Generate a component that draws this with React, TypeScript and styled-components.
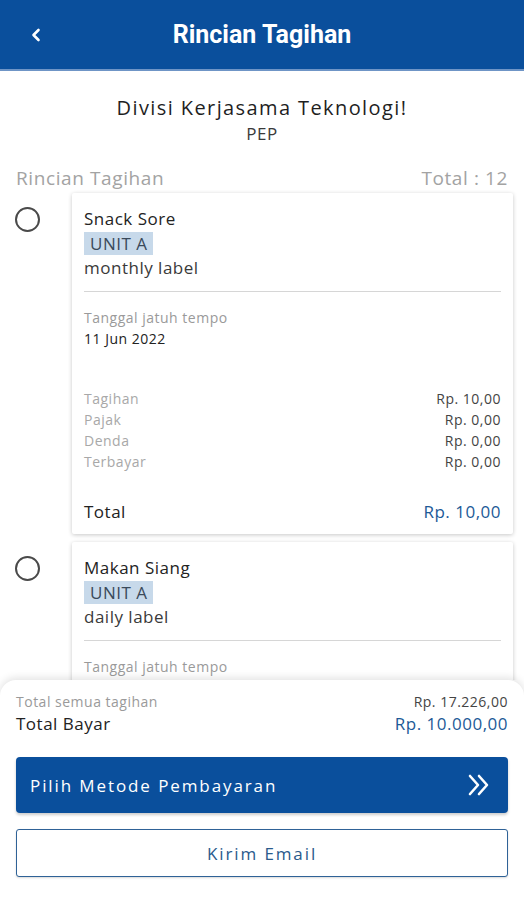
import React from "react";
import styled, { createGlobalStyle } from "styled-components";

const Global = createGlobalStyle`
  html, body { margin: 0; padding: 0; background: #fff; }
  * { box-sizing: border-box; }
  body { font-family: "Open Sans", "Noto Sans", sans-serif; }
`;

const Screen = styled.div`
  width: 524px;
  height: 900px;
  display: flex;
  flex-direction: column;
  overflow: hidden;
  background: #fff;
`;

const Header = styled.header`
  height: 71px;
  flex: none;
  background: #0a4f9c;
  display: grid;
  grid-template-columns: 72px 1fr 72px;
  align-items: center;
  color: #fff;
  border-bottom: 2px solid #6f95c6;
`;

const Back = styled.div`
  display: flex;
  justify-content: center;
`;

const Title = styled.h1`
  margin: 0;
  text-align: center;
  font-family: Roboto, sans-serif;
  font-weight: 700;
  font-size: 25px;
`;

const Scroll = styled.div`
  flex: 1;
  overflow: hidden;
  padding: 24px 0 0;
`;

const Org = styled.div`
  text-align: center;
  font-size: 20px;
  letter-spacing: 1.4px;
  color: #1f1f1f;
  line-height: 26px;
`;

const Sub = styled.div`
  text-align: center;
  font-size: 17px;
  letter-spacing: 0.6px;
  color: #3a3a3a;
  line-height: 24px;
  margin-top: 1px;
`;

const ListHead = styled.div`
  display: flex;
  justify-content: space-between;
  padding: 0 16px;
  margin-top: 20px;
  font-size: 19px;
  letter-spacing: 0.6px;
  color: #a3a3a3;
  line-height: 24px;
`;

const Row = styled.div`
  display: flex;
  align-items: flex-start;
  padding: 0 11px 0 15px;
  margin-top: 3px;
  & + & { margin-top: 8px; }
`;

const Radio = styled.div`
  width: 25px;
  height: 25px;
  border: 2px solid #4a4a4a;
  border-radius: 50%;
  flex: none;
  margin-top: 14px;
  margin-right: 32px;
`;

const Card = styled.div`
  flex: 1;
  background: #fff;
  border-radius: 2px;
  box-shadow: 0 1px 4px rgba(0,0,0,0.22);
  padding: 15px 12px 11px 12px;
  letter-spacing: 0.5px;
`;

const ItemName = styled.div`
  font-size: 17px;
  color: #232323;
  line-height: 22px;
`;

const Badge = styled.span`
  display: inline-block;
  background: #c7d9ea;
  color: #3a4a5a;
  font-size: 17px;
  line-height: 23px;
  padding: 0 6px;
  margin-top: 2px;
`;

const Label = styled.div`
  font-size: 17px;
  color: #3a3a3a;
  line-height: 25px;
`;

const Divider = styled.hr`
  border: none;
  border-top: 1px solid #d6d6d6;
  margin: 11px 0 15px;
`;

const Small = styled.div<{ $dark?: boolean }>`
  font-size: 14px;
  line-height: 21px;
  color: ${(p) => (p.$dark ? "#222" : "#9a9a9a")};
`;

const Lines = styled.div`
  margin-top: 39px;
`;

const Line = styled.div`
  display: flex;
  justify-content: space-between;
  font-size: 14px;
  line-height: 21px;
  color: #a8a8a8;
  & > span:last-child { color: #444; }
`;

const TotalLine = styled.div`
  display: flex;
  justify-content: space-between;
  margin-top: 29px;
  font-size: 17px;
  line-height: 22px;
  color: #222;
  & > span:last-child { color: #1d5a97; }
`;

const Sheet = styled.div`
  flex: none;
  position: relative;
  z-index: 1;
  background: #fff;
  border-radius: 16px 16px 0 0;
  box-shadow: 0 -2px 8px rgba(0,0,0,0.12);
  padding: 11px 16px 23px;
  letter-spacing: 0.5px;
`;

const SumLine = styled.div<{ $big?: boolean }>`
  display: flex;
  justify-content: space-between;
  font-size: ${(p) => (p.$big ? "17px" : "14px")};
  line-height: ${(p) => (p.$big ? "23px" : "21px")};
  color: ${(p) => (p.$big ? "#222" : "#9a9a9a")};
  & > span:last-child { color: ${(p) => (p.$big ? "#1d5a97" : "#444")}; }
`;

const PrimaryBtn = styled.button`
  margin-top: 22px;
  width: 100%;
  height: 56px;
  border: none;
  border-radius: 4px;
  background: #0a4f9c;
  color: #fff;
  display: flex;
  align-items: center;
  justify-content: space-between;
  padding: 0 16px 0 14px;
  font-family: "Open Sans", "Noto Sans", sans-serif;
  font-size: 17px;
  letter-spacing: 1.9px;
  box-shadow: 0 2px 3px rgba(0,0,0,0.2);
`;

const OutlineBtn = styled.button`
  margin-top: 16px;
  width: 100%;
  height: 48px;
  border: 1px solid #2f6297;
  border-radius: 3px;
  background: #fff;
  color: #2a5a8c;
  font-family: "Open Sans", "Noto Sans", sans-serif;
  font-size: 17px;
  letter-spacing: 1.9px;
  box-shadow: 0 1px 2px rgba(0,0,0,0.15);
`;

type Bill = {
  name: string;
  label: string;
  date: string;
  tagihan: string;
  total: string;
};

const bills: Bill[] = [
  { name: "Snack Sore", label: "monthly label", date: "11 Jun 2022", tagihan: "Rp. 10,00", total: "Rp. 10,00" },
  { name: "Makan Siang", label: "daily label", date: "11 Jun 2022", tagihan: "Rp. 10,00", total: "Rp. 10,00" },
];

function BillCard({ b }: { b: Bill }) {
  return (
    <Row>
      <Radio />
      <Card>
        <ItemName>{b.name}</ItemName>
        <Badge>UNIT A</Badge>
        <Label>{b.label}</Label>
        <Divider />
        <Small>Tanggal jatuh tempo</Small>
        <Small $dark>{b.date}</Small>
        <Lines>
          <Line><span>Tagihan</span><span>{b.tagihan}</span></Line>
          <Line><span>Pajak</span><span>Rp. 0,00</span></Line>
          <Line><span>Denda</span><span>Rp. 0,00</span></Line>
          <Line><span>Terbayar</span><span>Rp. 0,00</span></Line>
        </Lines>
        <TotalLine><span>Total</span><span>{b.total}</span></TotalLine>
      </Card>
    </Row>
  );
}

export default function App() {
  return (
    <>
      <Global />
      <Screen>
        <Header>
          <Back>
            <svg width="14" height="14" viewBox="0 0 14 14">
              <path d="M9.5 2 L4.5 7 L9.5 12" fill="none" stroke="#fff" strokeWidth="2.6" strokeLinecap="round" strokeLinejoin="round" />
            </svg>
          </Back>
          <Title>Rincian Tagihan</Title>
          <div />
        </Header>
        <Scroll>
          <Org>Divisi Kerjasama Teknologi!</Org>
          <Sub>PEP</Sub>
          <ListHead><span>Rincian Tagihan</span><span>Total : 12</span></ListHead>
          {bills.map((b) => <BillCard key={b.name} b={b} />)}
        </Scroll>
        <Sheet>
          <SumLine><span>Total semua tagihan</span><span>Rp. 17.226,00</span></SumLine>
          <SumLine $big><span>Total Bayar</span><span>Rp. 10.000,00</span></SumLine>
          <PrimaryBtn>
            <span>Pilih Metode Pembayaran</span>
            <svg width="26" height="26" viewBox="0 0 26 26">
              <path d="M4 4 L12 13 L4 22 M13 4 L21 13 L13 22" fill="none" stroke="#fff" strokeWidth="2.6" strokeLinecap="round" strokeLinejoin="round" />
            </svg>
          </PrimaryBtn>
          <OutlineBtn>Kirim Email</OutlineBtn>
        </Sheet>
      </Screen>
    </>
  );
}
